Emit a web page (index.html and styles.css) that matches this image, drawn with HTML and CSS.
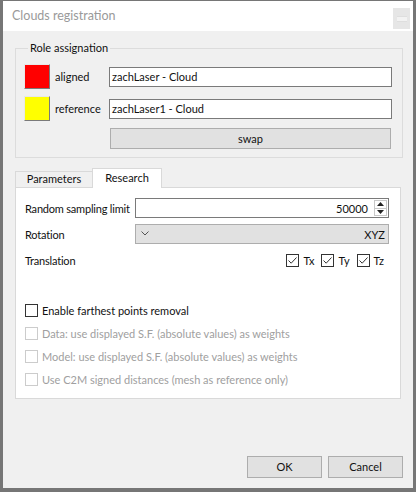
FILE: index.html
```html
<!DOCTYPE html>
<html>
<head>
<meta charset="utf-8">
<link rel="stylesheet" href="styles.css">
</head>
<body>
<div class="window">
  <div class="titlebar">
    <span class="title">Clouds registration</span>
    <span class="close"><span class="close-inner"></span></span>
  </div>
  <div class="client">
    <fieldset class="group">
      <legend>Role assignation</legend>
      <div class="role-row">
        <span class="swatch red"></span>
        <span class="role-label">aligned</span>
        <div class="field">zachLaser - Cloud</div>
      </div>
      <div class="role-row">
        <span class="swatch yellow"></span>
        <span class="role-label">reference</span>
        <div class="field">zachLaser1 - Cloud</div>
      </div>
      <div class="swap-row">
        <div class="btn swap">swap</div>
      </div>
    </fieldset>

    <div class="tabs">
      <div class="tabbar">
        <div class="tab">Parameters</div>
        <div class="tab active">Research</div>
      </div>
      <div class="pane">
        <div class="form-row">
          <span class="form-label">Random sampling limit</span>
          <div class="spin">
            <span class="spin-value">50000</span>
            <span class="spin-arrows">
              <span class="arrow-half"><svg width="7" height="4" viewBox="0 0 7 4"><polygon points="0,4 3.5,0 7,4" fill="#222"/></svg></span>
              <span class="arrow-half lower"><svg width="7" height="4" viewBox="0 0 7 4"><polygon points="0,0 3.5,4 7,0" fill="#222"/></svg></span>
            </span>
          </div>
        </div>
        <div class="form-row">
          <span class="form-label">Rotation</span>
          <div class="combo">
            <svg class="chev" width="8" height="5" viewBox="0 0 8 5"><polyline points="0.5,0.5 4,4 7.5,0.5" fill="none" stroke="#555" stroke-width="1"/></svg>
            <span class="combo-value">XYZ</span>
          </div>
        </div>
        <div class="form-row trans">
          <span class="form-label">Translation</span>
          <div class="checks">
            <span class="check"><span class="box on"><svg width="11" height="11" viewBox="0 0 11 11"><polyline points="1.5,5.5 4.2,8.2 9.5,2.5" fill="none" stroke="#333" stroke-width="1"/></svg></span>Tx</span>
            <span class="check"><span class="box on"><svg width="11" height="11" viewBox="0 0 11 11"><polyline points="1.5,5.5 4.2,8.2 9.5,2.5" fill="none" stroke="#333" stroke-width="1"/></svg></span>Ty</span>
            <span class="check"><span class="box on"><svg width="11" height="11" viewBox="0 0 11 11"><polyline points="1.5,5.5 4.2,8.2 9.5,2.5" fill="none" stroke="#333" stroke-width="1"/></svg></span>Tz</span>
          </div>
        </div>
        <div class="options">
          <div class="opt"><span class="box"></span>Enable farthest points removal</div>
          <div class="opt disabled"><span class="box"></span>Data: use displayed S.F. (absolute values) as weights</div>
          <div class="opt disabled"><span class="box"></span>Model: use displayed S.F. (absolute values) as weights</div>
          <div class="opt disabled"><span class="box"></span>Use C2M signed distances (mesh as reference only)</div>
        </div>
      </div>
    </div>

    <div class="footer">
      <div class="btn dlg">OK</div>
      <div class="btn dlg">Cancel</div>
    </div>
  </div>
</div>
</body>
</html>
```

FILE: styles.css
```css
* { box-sizing: border-box; }
html, body {
  margin: 0;
  padding: 0;
  background: #767676;
}
body {
  font-family: "Lato", "Noto Sans", sans-serif;
  font-size: 11px;
  color: #111;
}
.window {
  width: 416px;
  height: 492px;
  border-top: 1px solid #767676;
  border-left: 3px solid #767676;
  border-right: 3px solid #767676;
  border-bottom: 4px solid #767676;
  display: flex;
  flex-direction: column;
  background: #f0f0f0;
}
.titlebar {
  height: 30px;
  background: #fff;
  display: flex;
  align-items: center;
  justify-content: space-between;
  padding-left: 9px;
}
.title {
  font-size: 12.5px;
  color: #9a9a9a;
  margin-top: -1px;
}
.close {
  width: 17px;
  height: 21px;
  background: #e6e6e6;
  margin-top: 5px;
  margin-right: 3px;
  display: flex;
  align-items: center;
  justify-content: center;
}
.close-inner {
  width: 10px;
  height: 6px;
  background: #f2f2f2;
  border-top: 1px solid #dedede;
  border-bottom: 1px solid #dedede;
}
.client {
  flex: 1;
  display: flex;
  flex-direction: column;
}
.group {
  margin: 10px 10px 0 12px;
  padding: 9px 10px 8px 8px;
  border: 1px solid #dcdcdc;
  min-width: 0;
}
.group legend {
  padding: 0 2px;
  margin-left: 4px;
  line-height: 14px;
}
.role-row {
  display: flex;
  align-items: center;
  height: 25px;
  margin-bottom: 7px;
}
.swatch {
  width: 26px;
  height: 25px;
  border-right: 1px solid #7a7a7a;
  border-bottom: 1px solid #7a7a7a;
  border-top: 1px solid #e8e8e8;
  border-left: 1px solid #e8e8e8;
}
.swatch.red { background: #ff0000; }
.swatch.yellow { background: #ffff00; }
.role-label {
  width: 59px;
  padding-left: 5px;
}
.field {
  flex: 1;
  height: 20px;
  background: #fff;
  border: 1px solid #7a7a7a;
  padding-left: 2px;
  line-height: 18px;
}
.swap-row {
  display: flex;
  padding-left: 86px;
}
.btn {
  background: #e1e1e1;
  border: 1px solid #adadad;
  text-align: center;
}
.swap {
  flex: 1;
  height: 21px;
  line-height: 19px;
  margin-right: 1px;
}
.tabs {
  margin: 9px 12px 0 12px;
}
.tabbar {
  display: flex;
  align-items: flex-end;
  height: 20px;
}
.tab {
  border: 1px solid #d9d9d9;
  border-bottom: none;
  text-align: center;
  height: 16px;
  line-height: 14px;
  width: 78px;
}
.tab.active {
  position: relative;
  z-index: 1;
  background: #fff;
  height: 20px;
  width: 70px;
  margin-left: -1px;
  margin-bottom: -1px;
  line-height: 18px;
}
.pane {
  background: #fff;
  border: 1px solid #d9d9d9;
  height: 212px;
  padding: 10px 11px 0 9px;
}
.form-row {
  display: flex;
  align-items: center;
  height: 20px;
  margin-bottom: 6px;
}
.form-row.trans {
  margin-top: 1px;
  margin-bottom: 0;
}
.form-label {
  width: 110px;
  flex: none;
  letter-spacing: -0.2px;
}
.spin {
  flex: 1;
  height: 20px;
  border: 1px solid #7a7a7a;
  display: flex;
  align-items: center;
  justify-content: flex-end;
  padding-right: 1px;
}
.spin-value {
  margin-right: 6px;
}
.spin-arrows {
  width: 13px;
  height: 16px;
  border: 1px solid #c8c8c8;
  display: flex;
  flex-direction: column;
}
.arrow-half {
  flex: 1;
  display: flex;
  align-items: center;
  justify-content: center;
}
.arrow-half.lower {
  border-top: 1px solid #c8c8c8;
}
.combo {
  flex: 1;
  height: 20px;
  background: #e1e1e1;
  border: 1px solid #adadad;
  display: flex;
  align-items: center;
  justify-content: space-between;
  padding: 0 3px 0 5px;
}
.chev { margin-top: -1px; }
.checks {
  flex: 1;
  display: flex;
  justify-content: flex-end;
  gap: 7px;
  padding-right: 5px;
}
.check {
  display: flex;
  align-items: center;
}
.box {
  width: 13px;
  height: 13px;
  border: 1px solid #333;
  background: #fff;
  margin-right: 4px;
  display: inline-flex;
  align-items: center;
  justify-content: center;
  flex: none;
}
.options {
  margin-top: 30px;
  display: flex;
  flex-direction: column;
  gap: 3px;
}
.opt {
  display: flex;
  align-items: center;
  height: 20px;
}
.opt.disabled {
  color: #a0a0a0;
}
.opt.disabled .box {
  border-color: #cccccc;
}
.footer {
  margin-top: auto;
  display: flex;
  justify-content: flex-end;
  gap: 6px;
  padding: 0 10px 10px 0;
}
.dlg {
  width: 75px;
  height: 22px;
  line-height: 20px;
}
```
